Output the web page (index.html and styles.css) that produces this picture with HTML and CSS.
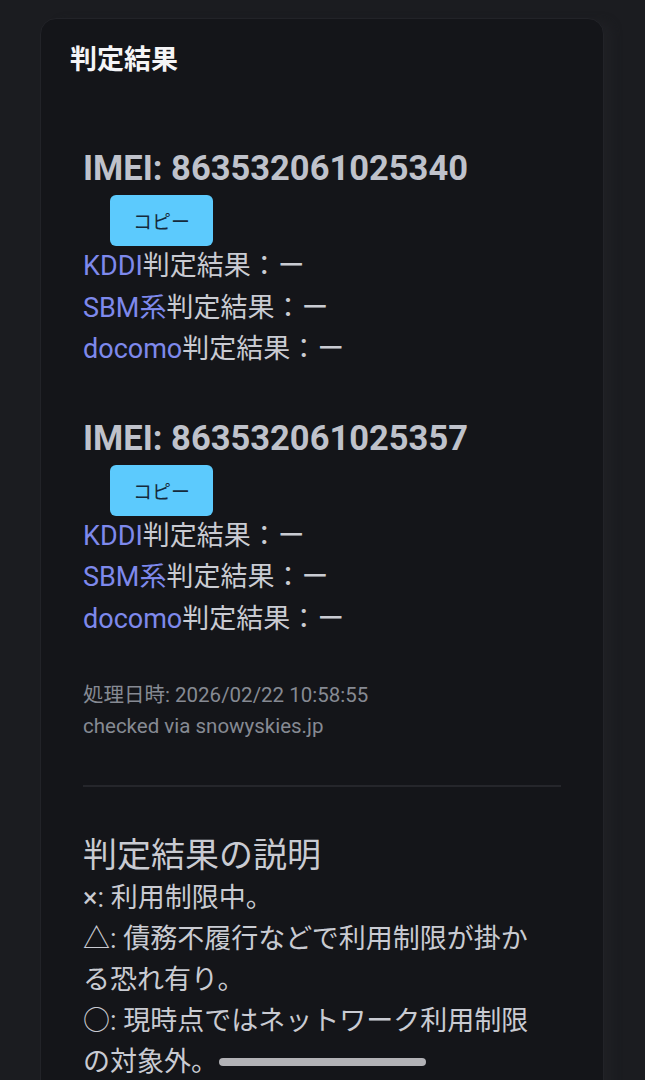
FILE: index.html
```html
<html lang="ja">

<head>
    <meta charset="utf-8" />
    <title>判定結果</title>

    <link rel="stylesheet" href="styles.css">
</head>

<body>

<div class="page">
    <div class="carte">
        <h2 class="titre">判定結果</h2>

        <div class="resultat">

            <div class="imei">
                <h3>IMEI: 863532061025340</h3>
                <button class="copie">コピー</button>
                <div class="ligne"><span class="op">KDDI</span>判定結果：ー</div>
                <div class="ligne"><span class="op">SBM系</span>判定結果：ー</div>
                <div class="ligne"><span class="op">docomo</span>判定結果：ー</div>
            </div>

            <div class="imei">
                <h3>IMEI: 863532061025357</h3>
                <button class="copie">コピー</button>
                <div class="ligne"><span class="op">KDDI</span>判定結果：ー</div>
                <div class="ligne"><span class="op">SBM系</span>判定結果：ー</div>
                <div class="ligne"><span class="op">docomo</span>判定結果：ー</div>
            </div>

            <div class="meta">
                <div>処理日時: 2026/02/22 10:58:55</div>
                <div>checked via snowyskies.jp</div>
            </div>

            <hr class="sep">

            <h3 class="expl">判定結果の説明</h3>
            <div class="desc">
                <div>×: 利用制限中。</div>
                <div>△: 債務不履行などで利用制限が掛かる恐れ有り。</div>
                <div>○: 現時点ではネットワーク利用制限の対象外。</div>
            </div>
        </div>
    </div>
</div>

<div class="barre"></div>

</body>
</html>
```

FILE: styles.css
```css
body {
    margin: 0;
    background: #1b1c20;
    font-family: Roboto, "Noto Sans CJK JP", sans-serif;
    color: #c9cbd2;
    height: 1080px;
    overflow: hidden;
}

div.page {
    padding: 18px 41px 0 40px;
}

div.carte {
    background: #141519;
    border: 1px solid #222328;
    border-radius: 16px;
    padding: 24px 29px 40px 29px;
    box-shadow: 12px 0 10px -4px #1f2024;
}

h2.titre {
    margin: 0;
    font-size: 27px;
    line-height: 35px;
    font-weight: bold;
    color: #f4f4f6;
}

div.resultat {
    padding: 0 13px;
    margin-top: 69px;
}

div.imei {
    margin-bottom: 46px;
}

div.imei h3 {
    margin: 0;
    font-size: 34.5px;
    line-height: 42px;
    font-weight: bold;
    color: #bfc2cb;
}

button.copie {
    display: block;
    margin: 6px 0 0 27px;
    width: 103px;
    height: 51px;
    border: none;
    border-radius: 6px;
    background: #5ccafd;
    color: #152a3c;
    font-family: "Noto Sans CJK JP", sans-serif;
    font-size: 19px;
}

div.ligne {
    font-size: 27px;
    line-height: 41.5px;
}

span.op {
    color: #7e89ec;
}

div.meta {
    margin-top: -6px;
    font-size: 20.5px;
    line-height: 31px;
    color: #868a93;
}

hr.sep {
    margin: 43px 0 0 0;
    border: none;
    height: 2px;
    background: #25262b;
}

h3.expl {
    margin: 45px 0 0 0;
    font-size: 34px;
    line-height: 46px;
    font-weight: normal;
    color: #c9cbd2;
}

div.desc {
    max-width: 465px;
    font-size: 27px;
    line-height: 41px;
}

div.barre {
    position: absolute;
    left: 219px;
    top: 1058px;
    width: 207px;
    height: 8px;
    border-radius: 4px;
    background: #b2b2b6;
}
```
